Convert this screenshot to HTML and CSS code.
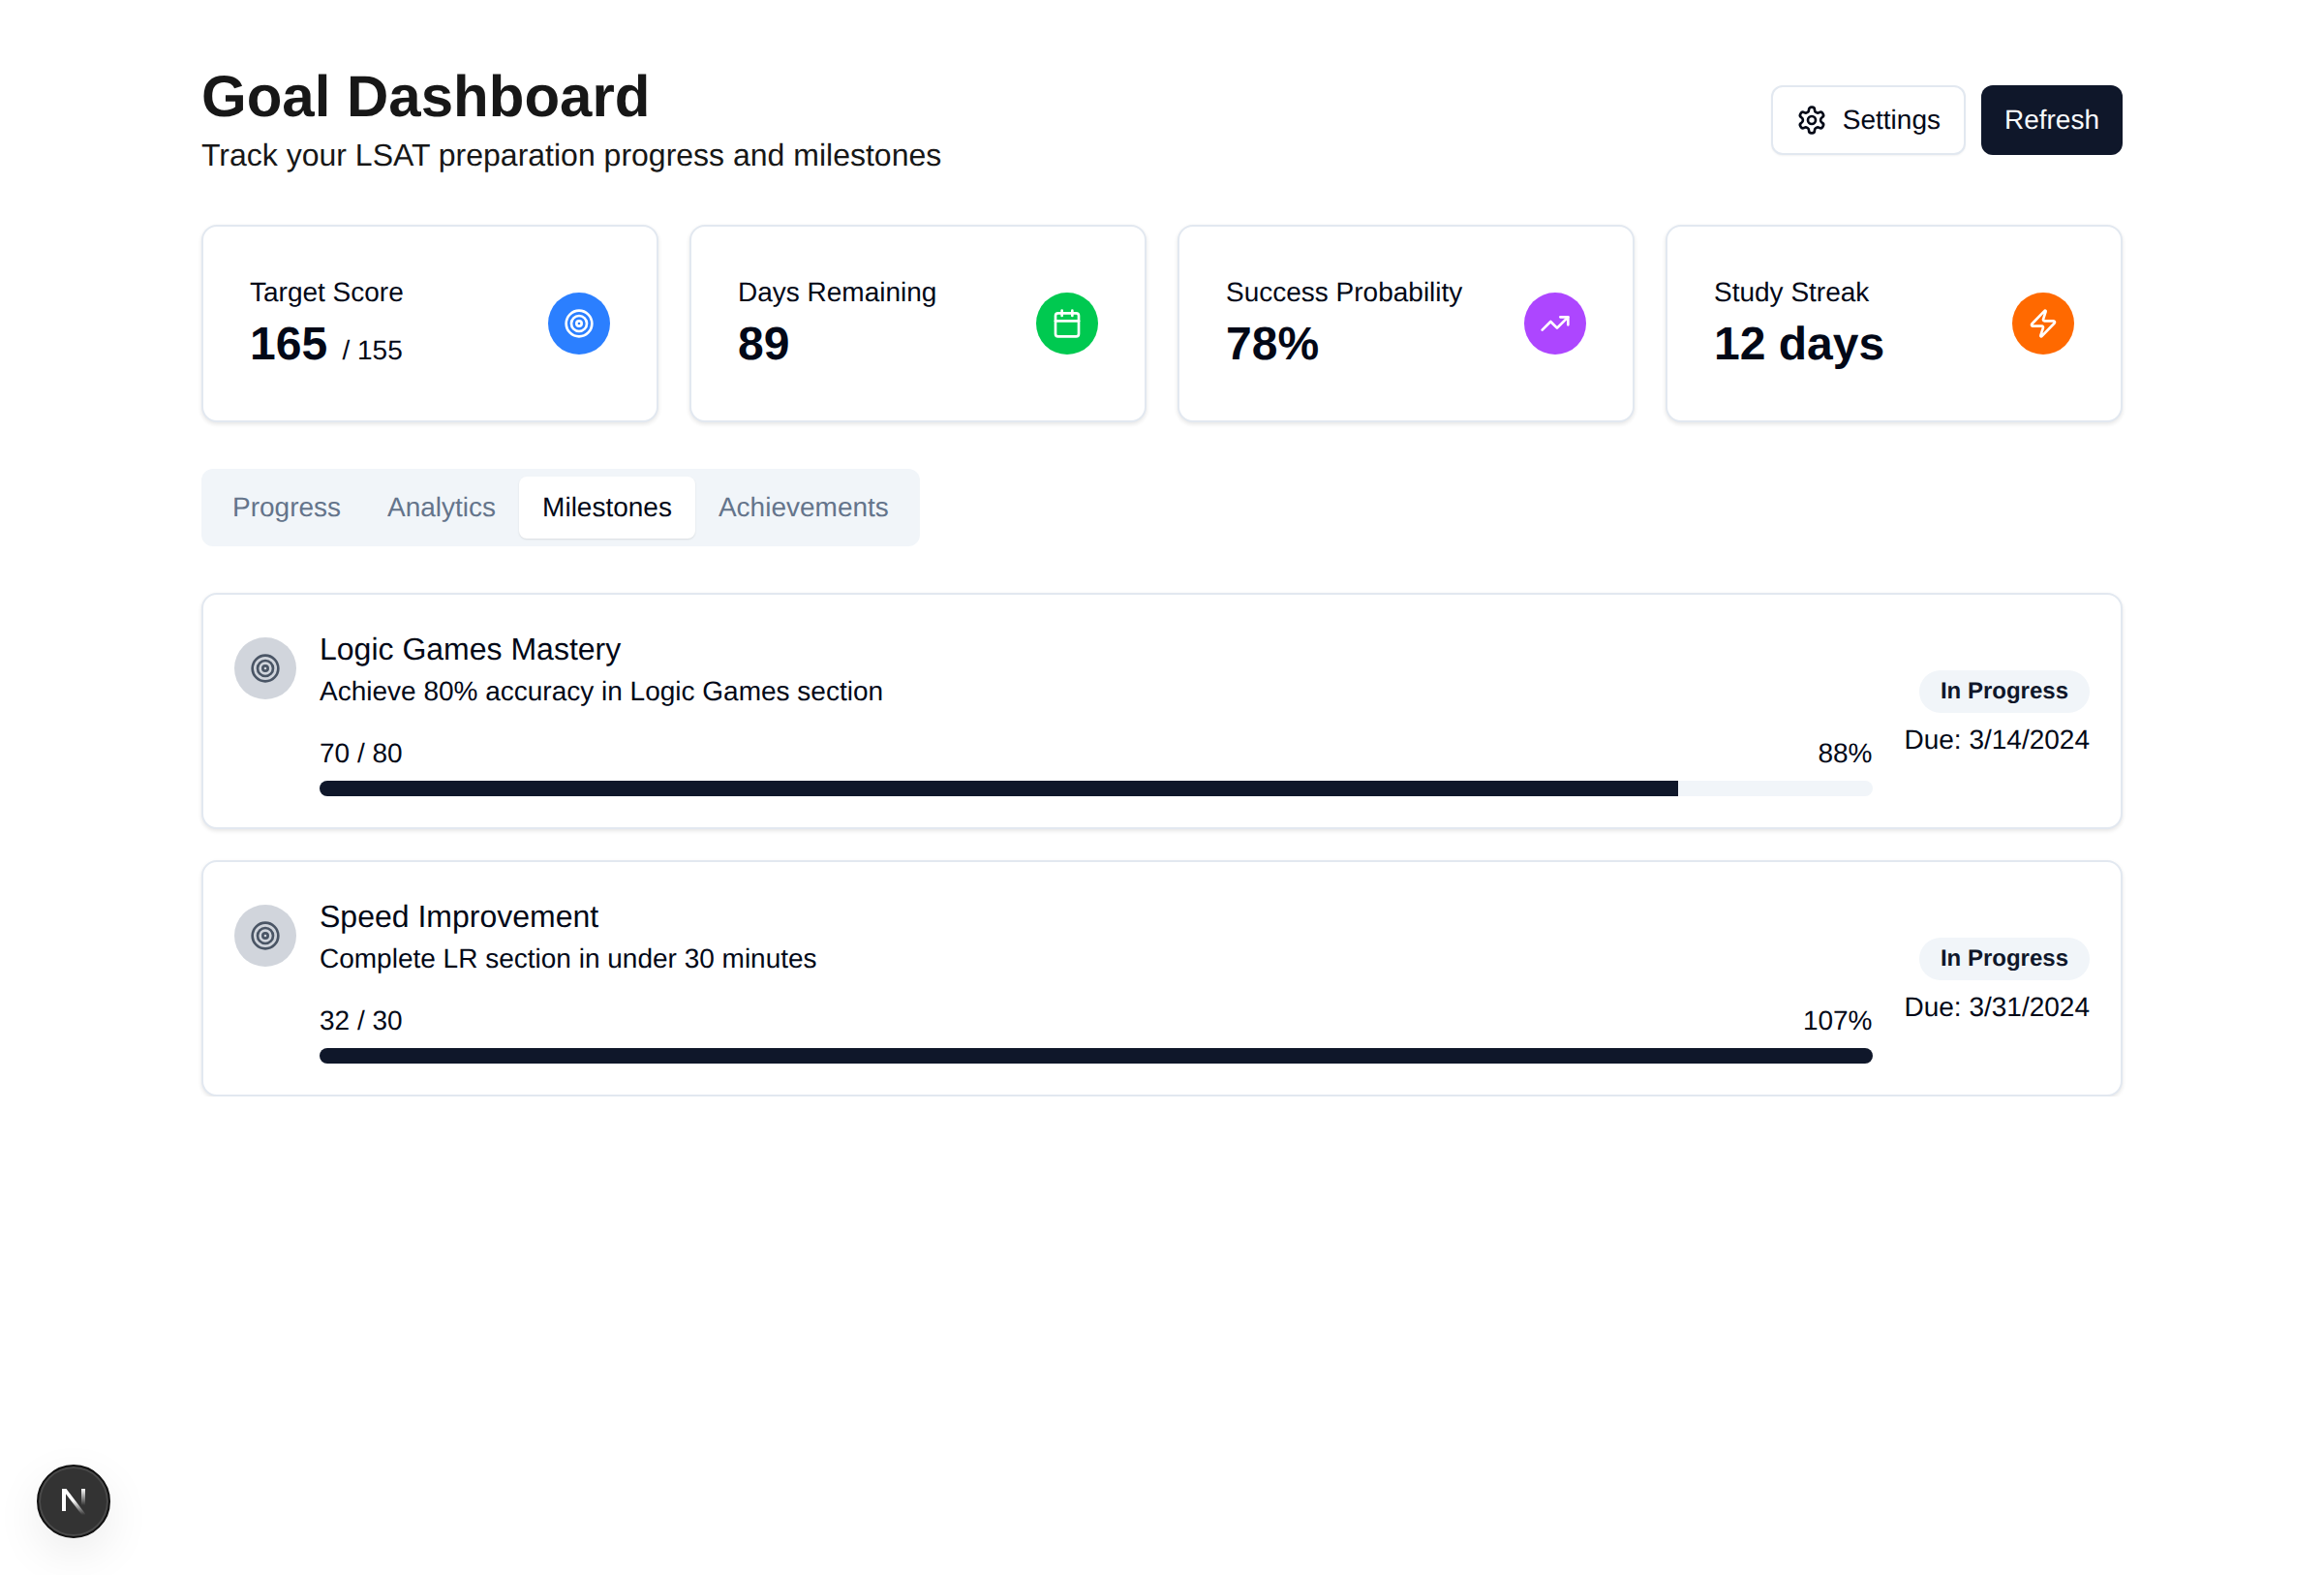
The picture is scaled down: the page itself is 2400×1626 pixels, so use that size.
FILE: index.html
```html
<!DOCTYPE html>
<html lang="en">

<head>
    <meta charset="UTF-8">
    <meta name="viewport" content="width=device-width, initial-scale=1.0">
    <title>Goal Dashboard</title>
    <link rel="stylesheet" href="styles.css">
</head>

<body>
    <div class="wrap">
        <header class="page-head">
            <div>
                <h1>Goal Dashboard</h1>
                <p class="subtitle">Track your LSAT preparation progress and milestones</p>
            </div>
            <div class="actions">
                <button class="btn btn-outline">
                    <svg class="ico" viewBox="0 0 24 24"><path d="M12.22 2h-.44a2 2 0 0 0-2 2v.18a2 2 0 0 1-1 1.73l-.43.25a2 2 0 0 1-2 0l-.15-.08a2 2 0 0 0-2.73.73l-.22.38a2 2 0 0 0 .73 2.73l.15.1a2 2 0 0 1 1 1.72v.51a2 2 0 0 1-1 1.74l-.15.09a2 2 0 0 0-.73 2.73l.22.38a2 2 0 0 0 2.73.73l.15-.08a2 2 0 0 1 2 0l.43.25a2 2 0 0 1 1 1.73V20a2 2 0 0 0 2 2h.44a2 2 0 0 0 2-2v-.18a2 2 0 0 1 1-1.73l.43-.25a2 2 0 0 1 2 0l.15.08a2 2 0 0 0 2.73-.73l.22-.39a2 2 0 0 0-.73-2.73l-.15-.08a2 2 0 0 1-1-1.74v-.5a2 2 0 0 1 1-1.74l.15-.09a2 2 0 0 0 .73-2.73l-.22-.38a2 2 0 0 0-2.73-.73l-.15.08a2 2 0 0 1-2 0l-.43-.25a2 2 0 0 1-1-1.73V4a2 2 0 0 0-2-2z"/><circle cx="12" cy="12" r="3"/></svg>
                    Settings
                </button>
                <button class="btn btn-dark">Refresh</button>
            </div>
        </header>

        <section class="stats">
            <div class="card stat">
                <div>
                    <p class="stat-label">Target Score</p>
                    <p class="stat-value">165 <span class="stat-sub">/ 155</span></p>
                </div>
                <div class="dot dot-blue">
                    <svg class="ico" viewBox="0 0 24 24"><circle cx="12" cy="12" r="10"/><circle cx="12" cy="12" r="6"/><circle cx="12" cy="12" r="2"/></svg>
                </div>
            </div>
            <div class="card stat">
                <div>
                    <p class="stat-label">Days Remaining</p>
                    <p class="stat-value">89</p>
                </div>
                <div class="dot dot-green">
                    <svg class="ico" viewBox="0 0 24 24"><path d="M8 2v4"/><path d="M16 2v4"/><rect x="3" y="4" width="18" height="18" rx="2"/><path d="M3 10h18"/></svg>
                </div>
            </div>
            <div class="card stat">
                <div>
                    <p class="stat-label">Success Probability</p>
                    <p class="stat-value">78%</p>
                </div>
                <div class="dot dot-purple">
                    <svg class="ico" viewBox="0 0 24 24"><polyline points="22 7 13.5 15.5 8.5 10.5 2 17"/><polyline points="16 7 22 7 22 13"/></svg>
                </div>
            </div>
            <div class="card stat">
                <div>
                    <p class="stat-label">Study Streak</p>
                    <p class="stat-value">12 days</p>
                </div>
                <div class="dot dot-orange">
                    <svg class="ico" viewBox="0 0 24 24"><path d="M4 14a1 1 0 0 1-.78-1.63l9.9-10.2a.5.5 0 0 1 .86.46l-1.92 6.02A1 1 0 0 0 13 10h7a1 1 0 0 1 .78 1.63l-9.9 10.2a.5.5 0 0 1-.86-.46l1.92-6.02A1 1 0 0 0 11 14z"/></svg>
                </div>
            </div>
        </section>

        <nav class="tabs">
            <span class="tab">Progress</span>
            <span class="tab">Analytics</span>
            <span class="tab tab-active">Milestones</span>
            <span class="tab">Achievements</span>
        </nav>

        <section class="milestones">
            <div class="card milestone">
                <div class="dot dot-grey">
                    <svg class="ico" viewBox="0 0 24 24"><circle cx="12" cy="12" r="10"/><circle cx="12" cy="12" r="6"/><circle cx="12" cy="12" r="2"/></svg>
                </div>
                <div class="ms-body">
                    <h3>Logic Games Mastery</h3>
                    <p class="ms-desc">Achieve 80% accuracy in Logic Games section</p>
                    <div class="ms-nums"><span>70 / 80</span><span>88%</span></div>
                    <div class="bar"><div class="bar-fill" style="width: 87.5%"></div></div>
                </div>
                <div class="ms-side">
                    <span class="badge">In Progress</span>
                    <p class="due">Due: 3/14/2024</p>
                </div>
            </div>
            <div class="card milestone">
                <div class="dot dot-grey">
                    <svg class="ico" viewBox="0 0 24 24"><circle cx="12" cy="12" r="10"/><circle cx="12" cy="12" r="6"/><circle cx="12" cy="12" r="2"/></svg>
                </div>
                <div class="ms-body">
                    <h3>Speed Improvement</h3>
                    <p class="ms-desc">Complete LR section in under 30 minutes</p>
                    <div class="ms-nums"><span>32 / 30</span><span>107%</span></div>
                    <div class="bar"><div class="bar-fill" style="width: 100%"></div></div>
                </div>
                <div class="ms-side">
                    <span class="badge">In Progress</span>
                    <p class="due">Due: 3/31/2024</p>
                </div>
            </div>
        </section>
    </div>

    <div class="next-badge">
        <svg viewBox="0 0 24 27" width="24" height="27">
            <defs>
                <linearGradient id="n_diag" gradientUnits="userSpaceOnUse" x1="0" y1="12" x2="0" y2="27">
                    <stop offset="0" stop-color="#fff"/>
                    <stop offset="1" stop-color="#fff" stop-opacity="0"/>
                </linearGradient>
                <linearGradient id="n_right" gradientUnits="userSpaceOnUse" x1="0" y1="0" x2="0" y2="17">
                    <stop offset="0" stop-color="#fff"/>
                    <stop offset="1" stop-color="#fff" stop-opacity="0"/>
                </linearGradient>
            </defs>
            <rect x="0" y="0" width="4" height="23" fill="#fff"/>
            <polygon points="0,0 4.5,0 25,27 20.5,27" fill="url(#n_diag)"/>
            <rect x="20" y="0" width="4" height="17" fill="url(#n_right)"/>
        </svg>
    </div>
</body>
</html>
```

FILE: styles.css
```css
* {
    padding: 0;
    margin: 0;
    box-sizing: border-box;
}

body {
    background-color: #fff;
    color: #020817;
    font-family: "Liberation Sans", Arial, sans-serif;
    text-rendering: geometricPrecision;
}

.wrap {
    width: 1984px;
    margin: 0 auto;
    padding-top: 64px;
}

.page-head {
    display: flex;
    justify-content: space-between;
    align-items: center;
    margin-bottom: 48px;
}

h1 {
    font-size: 60px;
    line-height: 72px;
    font-weight: bold;
    color: #171717;
}

.subtitle {
    font-size: 32px;
    line-height: 48px;
    color: #171717;
}

.actions {
    display: flex;
    gap: 16px;
}

.btn {
    display: inline-flex;
    align-items: center;
    gap: 16px;
    height: 72px;
    padding: 0 24px;
    border-radius: 12px;
    font: 28px "Liberation Sans", Arial, sans-serif;
    text-rendering: geometricPrecision;
}

.btn-outline {
    background-color: #fff;
    border: 2px solid #e2e8f0;
    color: #020817;
    box-shadow: 0 1px 2px rgba(0, 0, 0, 0.05);
}

.btn-dark {
    background-color: #0f172a;
    border: 0;
    color: #f8fafc;
}

.ico {
    width: 32px;
    height: 32px;
    fill: none;
    stroke: currentColor;
    stroke-width: 2;
    stroke-linecap: round;
    stroke-linejoin: round;
    flex-shrink: 0;
}

.card {
    background-color: #fff;
    border: 2px solid #e2e8f0;
    border-radius: 16px;
    box-shadow: 0 2px 4px rgba(0, 0, 0, 0.1);
}

.stats {
    display: grid;
    grid-template-columns: repeat(4, 1fr);
    gap: 32px;
    margin-bottom: 48px;
}

.stat {
    display: flex;
    justify-content: space-between;
    align-items: center;
    padding: 48px;
}

.stat-label {
    font-size: 28px;
    line-height: 40px;
}

.stat-value {
    font-size: 48px;
    line-height: 64px;
    font-weight: bold;
    padding-top: 2px;
    margin-bottom: -2px;
}

.stat-sub {
    font-size: 28px;
    line-height: 28px;
    font-weight: normal;
    margin-left: 2px;
}

.dot {
    width: 64px;
    height: 64px;
    border-radius: 50%;
    display: flex;
    align-items: center;
    justify-content: center;
    color: #fff;
    flex-shrink: 0;
}

.dot-blue { background-color: #2b7fff; }
.dot-green { background-color: #00c950; }
.dot-purple { background-color: #ad46ff; }
.dot-orange { background-color: #ff6900; }

.dot-grey {
    background-color: #d1d5dc;
    color: #4a5565;
    margin-top: 12px;
}

.tabs {
    display: inline-flex;
    height: 80px;
    padding: 8px;
    background-color: #f1f5f9;
    border-radius: 12px;
    margin-bottom: 48px;
    vertical-align: top;
}

.tab {
    display: flex;
    align-items: center;
    padding: 0 24px;
    font-size: 28px;
    color: #64748b;
    border-radius: 8px;
}

.tab-active {
    background-color: #fff;
    color: #020817;
    box-shadow: 0 1px 2px rgba(0, 0, 0, 0.1);
}

.milestones {
    display: flex;
    flex-direction: column;
    gap: 32px;
}

.milestone {
    display: flex;
    align-items: flex-start;
    gap: 24px;
    padding: 32px;
}

.ms-body {
    flex: 1;
}

h3 {
    font-size: 32px;
    line-height: 48px;
    font-weight: normal;
}

.ms-desc {
    font-size: 28px;
    line-height: 40px;
}

.ms-nums {
    display: flex;
    justify-content: space-between;
    font-size: 28px;
    line-height: 40px;
    margin-top: 24px;
    margin-bottom: 8px;
}

.bar {
    height: 16px;
    background-color: #f1f5f9;
    border-radius: 999px;
    overflow: hidden;
}

.bar-fill {
    height: 100%;
    background-color: #0f172a;
}

.ms-side {
    align-self: center;
    display: flex;
    flex-direction: column;
    align-items: flex-end;
    gap: 8px;
    margin-left: 9px;
    margin-top: 8px;
}

.badge {
    font-size: 24px;
    line-height: 32px;
    font-weight: bold;
    color: #0f172a;
    background-color: #f1f5f9;
    padding: 6px 22px;
    border-radius: 999px;
}

.due {
    font-size: 28px;
    line-height: 40px;
}

/* dev indicator, sits over the page */
.next-badge {
    position: fixed;
    left: 38px;
    bottom: 38px;
    width: 76px;
    height: 76px;
    border-radius: 50%;
    background-color: #333;
    border: 2px solid #111;
    box-shadow: inset 0 0 0 2px #4a4a4a, 0 16px 48px rgba(0, 0, 0, 0.08);
    display: flex;
    align-items: center;
    justify-content: center;
}
```
